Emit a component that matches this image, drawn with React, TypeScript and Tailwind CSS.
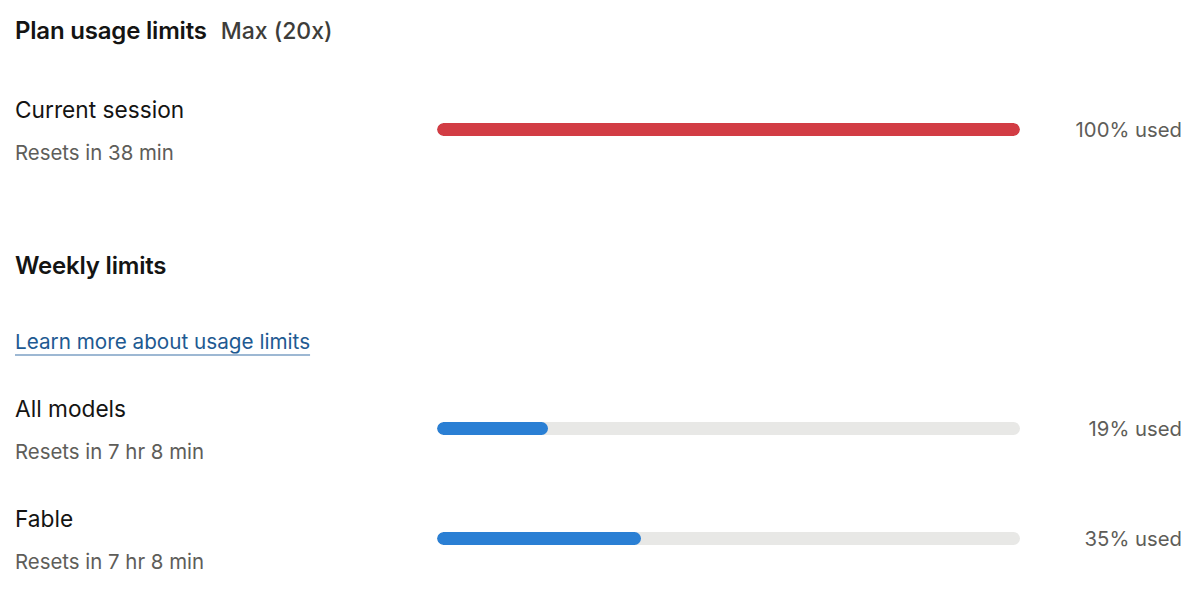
import React from "react";

type Limit = {
  name: string;
  resets: string;
  pct: number;
  color: string;
};

const session: Limit = { name: "Current session", resets: "Resets in 38 min", pct: 100, color: "bg-[#d23c44]" };

const weekly: Limit[] = [
  { name: "All models", resets: "Resets in 7 hr 8 min", pct: 19, color: "bg-[#2a7fd4]" },
  { name: "Fable", resets: "Resets in 7 hr 8 min", pct: 35, color: "bg-[#2a7fd4]" },
];

function LimitRow({ item }: { item: Limit }) {
  return (
    <div className="flex items-center">
      <div className="w-[422px] shrink-0 flex flex-col gap-[13px]">
        <div className="text-[22.7px] leading-[30px] text-[#141413]">{item.name}</div>
        <div className="text-[20.4px] leading-[30px] text-[#5e5d59]">{item.resets}</div>
      </div>
      <div className="flex-1 h-[13px] mb-[4px] rounded-full bg-[#e8e8e6] overflow-hidden">
        <div className={`h-full rounded-full ${item.color}`} style={{ width: `${item.pct}%` }} />
      </div>
      <div className="w-[162px] shrink-0 mb-[2px] text-right text-[20.3px] text-[#5e5d59]">{item.pct}% used</div>
    </div>
  );
}

export default function App() {
  return (
    <div className="min-h-screen w-full bg-white pl-[15px] pr-[17px] pt-[14px] font-['Inter',sans-serif] antialiased">
      {/* Header */}
      <div className="flex items-baseline gap-[14px]">
        <h2 className="text-[24px] leading-[34px] font-semibold text-[#141413] tracking-[-0.2px]">Plan usage limits</h2>
        <span className="text-[23px] font-medium text-[#3d3d3a]">Max (20x)</span>
      </div>

      <div className="mt-[46px]">
        <LimitRow item={session} />
      </div>

      {/* Weekly */}
      <h3 className="mt-[81px] text-[24px] leading-[34px] font-semibold text-[#141413] tracking-[-0.2px]">Weekly limits</h3>

      <a
        href="#"
        className="mt-[45px] inline-block text-[20.7px] leading-[28px] text-[#1e5a92] underline decoration-[#9db8d3] underline-offset-[5px] decoration-[1.5px]"
      >
        Learn more about usage limits
      </a>

      <div className="mt-[38px] flex flex-col gap-[37px]">
        {weekly.map((w) => (
          <LimitRow key={w.name} item={w} />
        ))}
      </div>
    </div>
  );
}
